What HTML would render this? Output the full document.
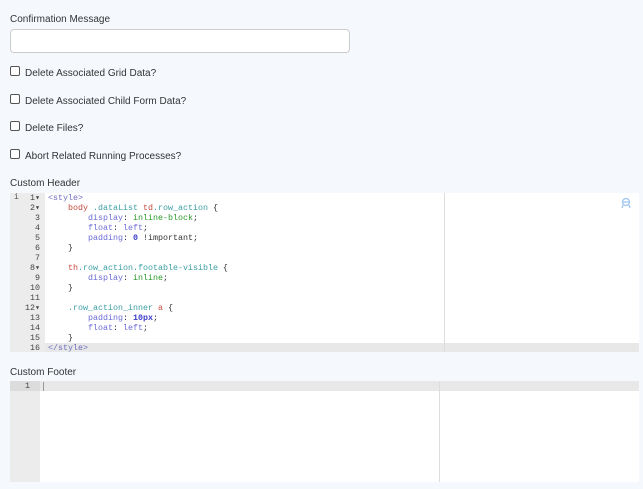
<!DOCTYPE html>
<html><head><style>
body{margin:0;width:643px;height:489px;background:#f5f9fe;font-family:"Liberation Sans",sans-serif;color:#333;position:relative;overflow:hidden}
.l{position:absolute;font-size:10px;left:10px}
.cb{position:absolute;left:10px;width:8px;height:8px;border:1px solid #555;border-radius:2px;background:#fff}
.inp{position:absolute;left:10px;top:29px;width:338px;height:22px;border:1px solid #ccc;border-radius:4px;background:#fff}
.ed{position:absolute;left:10px;width:629px;background:#fff;font-family:"Liberation Mono",monospace;font-size:8.33px;line-height:10px;overflow:hidden}
.g{position:absolute;left:0;top:0;bottom:0;background:#ececec;color:#333}
.ln{position:absolute;text-align:right;color:#444}
.code{position:absolute;left:38px;top:0;white-space:pre;color:#333}
.t{color:#6d6dbd}.r{color:#c5493c}.p{color:#6b6bd6}.v{color:#2a9a2a}.n{color:#3a3acc;font-weight:bold}.c{color:#3b9ea3}
</style></head><body>
<div class="l" style="top:14px">Confirmation Message</div>
<div class="inp"></div>
<div class="cb" style="top:66px"></div><div class="l" style="left:25px;top:68px">Delete Associated Grid Data?</div>
<div class="cb" style="top:94px"></div><div class="l" style="left:25px;top:96px">Delete Associated Child Form Data?</div>
<div class="cb" style="top:121px"></div><div class="l" style="left:25px;top:123px">Delete Files?</div>
<div class="cb" style="top:149px"></div><div class="l" style="left:25px;top:151px">Abort Related Running Processes?</div>
<div class="l" style="top:178px">Custom Header</div>
<div class="ed" style="top:193px;height:159px">
<div style="position:absolute;left:0;right:0;top:150px;height:10px;background:#e8e8e8"></div>
<div class="g" style="width:35px"></div>
<div style="position:absolute;left:434px;top:0;bottom:0;width:1px;background:#ddd"></div>
<div class="ln" style="left:0;top:0;width:30px;white-space:pre">  1▾
  2▾
  3
  4
  5
  6
  7
  8▾
  9
 10
 11
 12▾
 13
 14
 15
 16</div>
<div style="position:absolute;left:4px;top:0;font-size:8px;color:#555">i</div>
<div class="code"><span class="t">&lt;style&gt;</span>
    <span class="r">body</span> <span class="c">.dataList</span> <span class="r">td</span><span class="c">.row_action</span> {
        <span class="p">display</span>: <span class="v">inline-block</span>;
        <span class="p">float</span>: <span class="p">left</span>;
        <span class="p">padding</span>: <span class="n">0</span> !important;
    }

    <span class="r">th</span><span class="c">.row_action.footable-visible</span> {
        <span class="p">display</span>: <span class="v">inline</span>;
    }

    <span class="c">.row_action_inner</span> <span class="r">a</span> {
        <span class="p">padding</span>: <span class="n">10px</span>;
        <span class="p">float</span>: <span class="p">left</span>;
    }
<span class="t">&lt;/style&gt;</span></div>
<svg style="position:absolute;left:611px;top:5px" width="10" height="11" viewBox="0 0 10 11"><circle cx="5" cy="4" r="3.5" fill="none" stroke="#9cc4f0" stroke-width="1.2"/><path d="M1.5 4h7M2 7l-1 3M8 7l1 3" stroke="#9cc4f0" stroke-width="1.2"/></svg>
</div>
<div class="l" style="top:367px">Custom Footer</div>
<div class="ed" style="top:381px;height:101px">
<div style="position:absolute;left:0;right:0;top:0;height:10px;background:#e8e8e8"></div>
<div class="g" style="width:30px;background:#ececec"></div>
<div style="position:absolute;left:0;width:30px;top:0;height:10px;background:#dcdcdc"></div>
<div class="ln" style="left:0;top:0;width:20px">1</div>
<div style="position:absolute;left:33px;top:1px;width:1px;height:9px;background:#999"></div>
<div style="position:absolute;left:429px;top:0;bottom:0;width:1px;background:#ddd"></div>
</div>
</body></html>
